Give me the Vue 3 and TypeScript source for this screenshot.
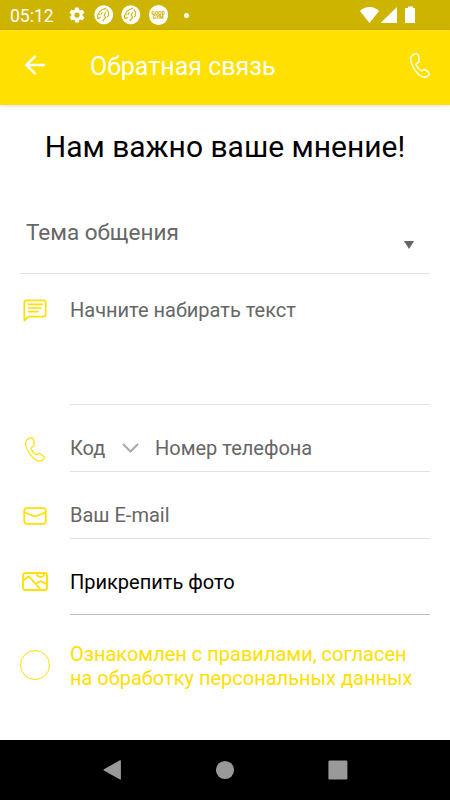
<script setup lang="ts">
import { ref } from 'vue'

const accepted = ref(false)
const phonePath =
  'M4.2 1.2C2 2.2.5 4.2.7 7c.3 5 4.6 11.500 8.600 15 2.700 2.200 5.700 2.800 8 1.300 1.200-.8 2.300-2 1.900-3.100-.3-.9-3.600-3.300-4.700-3.700-1.200-.5-2.100 1.400-3.200 1.200C9.600 17.400 6 12.500 6 11.200c0-1.200 2.900-1.200 3-2.500.1-1.100-.3-5.600-.9-6.900C7.400.3 5.700.5 4.200 1.200Z'
</script>

<template>
  <div class="screen">
    <header class="status">
      <span class="clock">05:12</span>
      <svg class="gear" viewBox="0 0 24 24"><path fill-rule="evenodd" d="M19.400 13a7.500 7.500 0 0 0 0-2l2.100-1.600a.5.5 0 0 0 .1-.7l-2-3.400a.5.5 0 0 0-.6-.2l-2.500 1a7 7 0 0 0-1.700-1l-.4-2.700a.5.5 0 0 0-.5-.4h-4a.5.5 0 0 0-.5.400L9 5.100a7 7 0 0 0-1.700 1l-2.500-1a.5.5 0 0 0-.6.200l-2 3.400a.5.5 0 0 0 .1.700L4.500 11a7.500 7.500 0 0 0 0 2l-2.100 1.600a.5.5 0 0 0-.1.700l2 3.400c.1.200.4.3.6.2l2.500-1a7 7 0 0 0 1.700 1l.4 2.700c0 .2.200.4.500.4h4c.2 0 .5-.2.500-.4l.4-2.700a7 7 0 0 0 1.700-1l2.500 1c.2.100.5 0 .6-.2l2-3.400a.5.5 0 0 0-.1-.7ZM12 15.500a3.500 3.500 0 1 1 0-7 3.500 3.500 0 0 1 0 7Z" /></svg>
      <svg v-for="n in 2" :key="n" class="badge" viewBox="0 0 20 20">
        <circle cx="10" cy="10" r="9.700" />
        <path class="mark" d="M12.500 3 9 4.500 6 6.500 3.500 11l.5 3 3-1.500M8.500 7.500 7 10M13 4.500l2 3v3l-1.500 2M12 7.500l-1.500 3 1.500 2-3 4M5.500 9.500v1" />
      </svg>
      <span class="gym"><b>GOOD</b><b>GYM</b></span>
      <i class="dot"></i>
      <svg class="signals" viewBox="0 0 56 18">
        <path d="M0 5C5-.5 14-.5 19 5L9.500 17Z" />
        <path d="M20.500 17H37V1Z" />
        <path d="M48 2h2V.5h5V2h2v14.500q0 .5-.5.500h-9q-.5 0-.5-.5V2.500q0-.5.500-.5Z" transform="translate(-2)" />
      </svg>
    </header>

    <div class="toolbar">
      <svg class="back" viewBox="0 0 20 20"><path d="M20 10H1.500M10.500.8 1.300 10l9.200 9.200" /></svg>
      <h1>Обратная связь</h1>
      <svg class="phone" viewBox="0 0 20 25"><path :d="phonePath" /></svg>
    </div>

    <main>
      <h2>Нам важно ваше мнение!</h2>
      <div class="topic"><span>Тема общения</span><i class="caret"></i></div>

      <div class="row message">
        <svg class="icon chat" viewBox="0 0 24 23"><path d="M4 1.300H20.500Q22.700 1.300 22.700 3.500V15.500Q22.700 17.700 20.500 17.700H5.500L1.300 21.500V4Q1.300 1.300 4 1.300ZM5.500 5.400H19M5.500 9H18M5.500 12.600H15" /></svg>
        <div class="field"><span class="msg">Начните набирать текст</span></div>
      </div>

      <div class="row tel">
        <svg class="icon phone" viewBox="0 0 20 25"><path :d="phonePath" /></svg>
        <div class="field">
          <span class="code">Код</span>
          <svg class="chevron" viewBox="0 0 17 10"><path d="m1 1 7.500 7.500L16 1" /></svg>
          <span class="number">Номер телефона</span>
        </div>
      </div>

      <div class="row mail">
        <svg class="icon envelope" viewBox="0 0 24 18"><rect x="1.200" y="1.200" width="21.600" height="15.600" rx="2.500" /><path d="m1.500 5.500 10.500 4 10.500-4" /></svg>
        <div class="field"><span class="email">Ваш E-mail</span></div>
      </div>

      <div class="row photo">
        <svg class="icon picture" viewBox="0 0 26 19"><rect x="1" y="1" width="24" height="17" rx="2.500" /><path d="m1 8.500 6-4L19 18M13.500 12l5-3L25 12.500M14.800 1.500C15 6 22 6 22.300 1.500" /></svg>
        <div class="field"><span class="attach">Прикрепить фото</span></div>
      </div>

      <div class="consent">
        <button type="button" role="checkbox" :aria-checked="accepted" :class="{ checked: accepted }" @click="accepted = !accepted"></button>
        <p><span class="line1">Ознакомлен с правилами, согласен</span><br /><span class="line2">на обработку персональных данных</span></p>
      </div>
    </main>

    <nav>
      <svg viewBox="0 0 20 20"><path d="M.9 9.300 16.900.3q1-.4 1 .7v18q0 1-1 .6l-16-9q-1-.6 0-1.300Z" /></svg>
      <svg viewBox="0 0 20 20"><circle cx="10" cy="10" r="9.100" /></svg>
      <svg viewBox="0 0 20 20"><rect x=".4" y=".4" width="19" height="19.200" rx="1.300" /></svg>
    </nav>
  </div>
</template>

<style>
body { margin: 0; }
</style>

<style scoped>
.screen { width: 450px; height: 800px; display: flex; flex-direction: column; overflow: hidden; background: #fff; font-family: Roboto, sans-serif; color: #000; }
* { box-sizing: border-box; }
svg { display: block; flex: none; overflow: visible; }
h1, h2, p { margin: 0; font-weight: 400; white-space: nowrap; }
span { white-space: nowrap; }
.status { height: 30px; flex: none; display: flex; align-items: center; padding-left: 10px; background: #ccb400; color: #fff; }
.status svg { fill: #fff; }
.clock { width: 57.500px; font-size: 17.500px; line-height: 30px; padding-top: 1px; }
.gear { width: 18px; height: 18px; }
.badge { width: 19.500px; height: 19.500px; margin-left: 8px; }
.badge .mark { fill: none; stroke: #ccb400; stroke-width: 1.100; }
.gym { width: 19.500px; height: 19.500px; margin-left: 8px; border-radius: 50%; background: #fff; color: #ccb400; display: flex; flex-direction: column; align-items: center; justify-content: center; }
.gym b { font-size: 5px; line-height: 4.500px; font-weight: 900; }
.dot { width: 5px; height: 5px; border-radius: 50%; background: #fff; margin-left: 16px; }
.signals { width: 56px; height: 18px; margin-left: 170.500px; }
.toolbar { height: 75px; flex: none; display: flex; align-items: center; padding: 0 20px 0 25px; background: #ffe000; color: #fff; box-shadow: 0 1px 4px #0002; position: relative; }
.back { width: 20px; height: 20px; margin-top: -5px; }
.back path { fill: none; stroke: #fff; stroke-width: 2.500; }
h1 { margin-left: 45px; font-size: 25px; line-height: 30px; flex: 1; padding-bottom: 2px; }
.phone { width: 20px; height: 25px; fill: none; stroke: #ffe000; stroke-width: 1.200; }
.toolbar .phone { stroke: #fff; stroke-width: 1.400; margin-top: -4px; }
main { flex: 1; padding: 0 20px; }
h2 { height: 93px; padding-top: 24px; font-size: 30px; line-height: 36px; text-align: center; }
.topic { height: 76px; border-bottom: 1px solid #e4e4e4; display: flex; justify-content: space-between; padding: 21px 16px 0 6px; font-size: 22.500px; line-height: 27px; color: #666; }
.caret { width: 10px; height: 8px; margin-top: 22px; background: #666; clip-path: polygon(0 0, 100% 0, 50% 100%); }
.row { display: flex; color: #666; font-size: 20px; line-height: 24px; }
.icon { fill: none; stroke: #ffe000; }
.field { margin-left: auto; width: 360px; border-bottom: 1px solid #e2e2e2; display: flex; }
.message { height: 131px; }
.chat { width: 24px; height: 23px; margin: 25px 0 0 3px; stroke-width: 1.700; stroke-linejoin: round; stroke-linecap: round; }
.message .field { padding-top: 24px; }
.tel { height: 67px; }
.tel .icon { margin: 32px 0 0 5px; }
.tel .field { padding-top: 31px; }
.code { width: 52px; }
.chevron { width: 17px; height: 10px; margin-top: 7px; fill: none; stroke: #aaa; stroke-width: 2; }
.number { margin-left: 16px; }
.mail { height: 67px; }
.envelope { width: 24px; height: 18px; margin: 35px 0 0 3px; stroke-width: 1.700; }
.mail .field { padding-top: 31px; }
.photo { height: 76px; color: #000; }
.picture { width: 26px; height: 19px; margin: 33px 0 0 2px; stroke-width: 1.800; }
.photo .field { padding-top: 31px; border-color: #bdbdbd; }
.consent { display: flex; align-items: center; margin-top: 27px; color: #ffe000; font-size: 20px; line-height: 24px; }
.consent button { width: 30px; height: 30px; padding: 0; border: 1px solid #ffe000; border-radius: 50%; background: transparent; margin: -2px 20px 0 0; }
.consent button.checked { background: #ffe000; }
nav { height: 60px; flex: none; background: #000; display: flex; justify-content: center; align-items: center; gap: 92.500px; }
nav svg { width: 20px; height: 20px; fill: #999; }
</style>
